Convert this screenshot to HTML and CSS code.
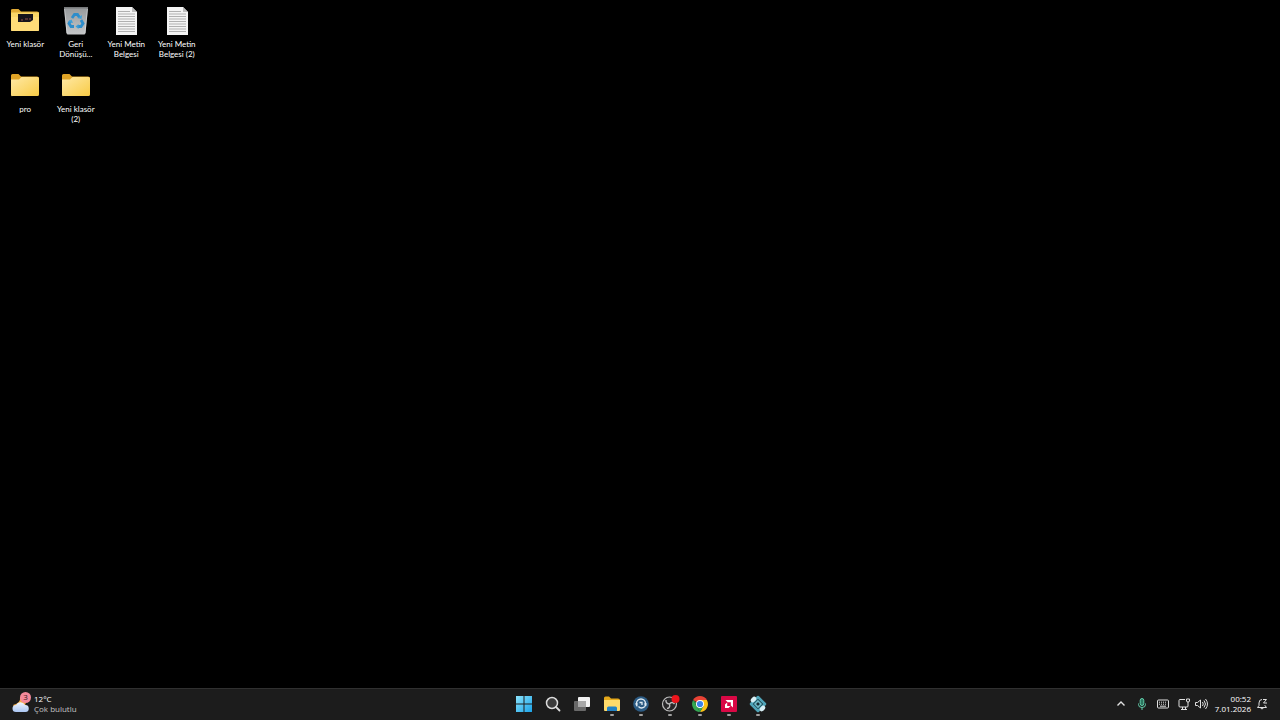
FILE: index.html
```html
<!DOCTYPE html>
<html lang="tr">
<head>
<meta charset="utf-8">
<meta name="viewport" content="width=device-width, initial-scale=1">
<title>Masaüstü</title>
<link rel="stylesheet" href="styles.css">
</head>
<body>
<svg class="defs" aria-hidden="true">
  <defs>
    <linearGradient id="folder-fill" x1="0" y1="0" x2="1" y2="1"><stop offset="0" stop-color="#ffe9a6"/><stop offset="1" stop-color="#f8cb45"/></linearGradient>
    <linearGradient id="bin-fill" x1="0" y1="0" x2="0" y2="1"><stop offset="0" stop-color="#96999b"/><stop offset="1" stop-color="#c4c6c8"/></linearGradient>
    <linearGradient id="win-fill" x1="0" y1="0" x2="1" y2="1"><stop offset="0" stop-color="#8be3fb"/><stop offset="1" stop-color="#1ba3e8"/></linearGradient>
    <linearGradient id="cloud-fill" x1="0" y1="0" x2="0" y2="1"><stop offset="0" stop-color="#f2f6ff"/><stop offset="1" stop-color="#aac6f2"/></linearGradient>
    <symbol id="folder" viewBox="0 0 30 30">
      <path d="M1 5.500q0-1.500 1.500-1.500h6l2.500 2.500h16q2 0 2 1.500v6H1z" fill="#dfa326"/>
      <path d="M1 9.500h8l2.500-2.500H27.500q1.500 0 1.500 1.500v16q0 1.500-1.500 1.500h-25Q1 26.500 1 25z" fill="url(#folder-fill)"/>
    </symbol>
    <symbol id="document" viewBox="0 0 30 30">
      <path d="M5 2h16l5 5v23H5z" fill="#f4f4f4"/>
      <path d="M21 2v5h5z" fill="#bdbdbd"/>
      <path d="M7 6.500h12M7 9h17M7 11.500h17M7 14h17M7 16.500h17M7 19h17M7 21.500h17M7 24h17M7 26.500h17" stroke="#a8a8a8" stroke-width=".9"/>
    </symbol>
  </defs>
</svg>

<main class="desktop">
  <button class="shortcut" type="button">
    <svg class="shortcut-icon" viewBox="0 0 30 30" aria-hidden="true">
      <path d="M1 5Q1 4 2.500 4h6l2.500 2.500h16q2 0 2 1.500v6H1z" fill="#e0aa35"/>
      <path d="M1 7.500h28V25q0 1-1 1H2q-1 0-1-1z" fill="#f9d568"/>
      <path d="M8 9h15v8H8z" fill="#17131b"/>
      <path d="M12 14v2M15 14h3M20 13v2" stroke="#94534c"/>
      <path d="M1 12h7v5h12l3-2v-3h6v12.500q0 1.500-1.500 1.500h-25Q1 26 1 24.500z" fill="#ffdc78"/>
    </svg>
    <span class="shortcut-label">Yeni klasör</span>
  </button>
  <button class="shortcut" type="button">
    <svg class="shortcut-icon" viewBox="0 0 30 30" aria-hidden="true">
      <path d="M3 2h24l-2.500 26q-.200 1.500-1.500 1.500H7Q5.700 29.500 5.500 28z" fill="url(#bin-fill)"/>
      <path d="M3 2h24l-.200 1.500H3.200z" fill="#77797b"/>
      <path d="M3.500 4 6 28M26.500 4 24 28" stroke="#e2e4e5" stroke-width=".6"/>
      <g fill="none" stroke="#2d8dcb" stroke-width="2.800">
        <path d="M11 13l2.500-3.500h3l2 3"/>
        <path d="M20 15l2 3.500-2 3h-3"/>
        <path d="M13 21.500h-3l-2-3 1.500-2.500"/>
      </g>
      <path d="M16.500 13l4 1 .500-4zM17.500 19v5l-3-2.500zM7 17l3.500-2.500 1.500 3.500z" fill="#3c9fd9"/>
    </svg>
    <span class="shortcut-label">Geri<br>Dönüşü...</span>
  </button>
  <button class="shortcut" type="button">
    <svg class="shortcut-icon" aria-hidden="true"><use href="#document"/></svg>
    <span class="shortcut-label">Yeni Metin<br>Belgesi</span>
  </button>
  <button class="shortcut" type="button">
    <svg class="shortcut-icon" aria-hidden="true"><use href="#document"/></svg>
    <span class="shortcut-label">Yeni Metin<br>Belgesi (2)</span>
  </button>
  <button class="shortcut row-start" type="button">
    <svg class="shortcut-icon" aria-hidden="true"><use href="#folder"/></svg>
    <span class="shortcut-label">pro</span>
  </button>
  <button class="shortcut" type="button">
    <svg class="shortcut-icon" aria-hidden="true"><use href="#folder"/></svg>
    <span class="shortcut-label">Yeni klasör<br>(2)</span>
  </button>
</main>

<footer class="taskbar">
  <button class="weather" type="button">
    <span class="weather-icon">
      <svg viewBox="0 0 20 20" aria-hidden="true">
        <path d="M9 3q1 6-7 8 2 4 8 3 6-2 5-9z" fill="#f5ad45"/>
        <path d="M5 18a3.500 3.500 0 0 1 0-7 5 5 0 0 1 9 0 3.500 3.500 0 0 1 .500 7z" fill="url(#cloud-fill)"/>
      </svg>
      <span class="weather-badge">3</span>
    </span>
    <span class="weather-text">
      <span class="temperature">12°C</span>
      <span class="condition">Çok bulutlu</span>
    </span>
  </button>

  <nav class="apps" aria-label="Görev çubuğu">
    <button class="app" type="button" aria-label="Başlat">
      <svg viewBox="0 0 20 20" aria-hidden="true"><path d="M2 2h7.500v7.500H2zM10.500 2H18v7.500h-7.500zM2 10.500h7.500V18H2zM10.500 10.500H18V18h-7.500z" fill="url(#win-fill)"/></svg>
    </button>
    <button class="app" type="button" aria-label="Ara">
      <svg viewBox="0 0 20 20" aria-hidden="true"><circle cx="9" cy="9" r="5.500" fill="#3b3b3b" stroke="#dcdcdc" stroke-width="1.500"/><path d="M13 13l3.500 3.500" stroke="#dcdcdc" stroke-width="1.800" stroke-linecap="round"/></svg>
    </button>
    <button class="app" type="button" aria-label="Görev görünümü">
      <svg viewBox="0 0 20 20" aria-hidden="true"><rect x="6" y="3" width="12" height="10" rx="1" fill="#f2f2f2"/><rect x="2" y="7" width="12" height="10" rx="1" fill="#696969"/><path d="M6 7h8v6H6z" fill="#a7a7a7"/></svg>
    </button>
    <button class="app running" type="button" aria-label="Dosya Gezgini">
      <svg viewBox="0 0 20 20" aria-hidden="true"><path d="M2 4q0-1.500 1.500-1.500H7l2 2h7q2 0 2 2V10H2z" fill="#e6a91b"/><path d="M2 6h16v10q0 1-1 1H3q-1 0-1-1z" fill="#ffdb6b"/><path d="M5 17v-3q0-1.500 1.500-1.500h7q1.500 0 1.500 1.500v3z" fill="#2382c5"/></svg>
    </button>
    <button class="app running" type="button" aria-label="TeamSpeak">
      <svg viewBox="0 0 20 20" aria-hidden="true"><circle cx="10" cy="10" r="7.800" fill="#2c5b83"/><path d="M5.500 11V9.500a4.500 4.500 0 0 1 9 0V11" fill="none" stroke="#dfeaf2" stroke-width="1.300"/><path d="M4.500 9h2v3.500h-1q-1-1-1-3.500zM13.500 9h2v2.500l-1 1h-1z" fill="#dfeaf2"/><path d="M8.500 8.500h2.500v2.500M7.500 12.500q2.500 3 6.500 0" fill="none" stroke="#dfeaf2" stroke-width="1.300"/></svg>
    </button>
    <button class="app running" type="button" aria-label="OBS Studio">
      <svg viewBox="0 0 20 20" aria-hidden="true"><circle cx="9.500" cy="10" r="7" fill="#272628" stroke="#bdbdbd" stroke-width="1.200"/><path d="M9.500 10Q5.500 9.500 6 6M9.500 10q2.500-3 5 0M9.500 10q1 4-2.500 4.500" fill="none" stroke="#bdbdbd" stroke-width="1.400"/><circle cx="15.500" cy="5" r="4" fill="#ed151c"/></svg>
    </button>
    <button class="app running" type="button" aria-label="Google Chrome">
      <svg viewBox="0 0 20 20" aria-hidden="true"><path d="M10 10 3.100 6A8 8 0 0 1 16.900 6z" fill="#e94335"/><path d="M10 10V6h6.900A8 8 0 0 1 10 18l3.500-6z" fill="#fbc116"/><path d="M3.100 6 10 18A8 8 0 0 1 3.100 6z" fill="#34a853"/><path d="M3.100 6 6.600 12 10 18l3.500-6H10z" fill="#34a853"/><circle cx="10" cy="10" r="4" fill="#fff"/><circle cx="10" cy="10" r="3.100" fill="#3b83ec"/></svg>
    </button>
    <button class="app running" type="button" aria-label="AMD Software">
      <svg viewBox="0 0 20 20" aria-hidden="true"><rect x="2" y="2" width="16" height="16" rx="1" fill="#d90845"/><path d="M6.500 6H14v7.500l-2.200-2V8.200H8.700zM6 10.500l2.200-2V12h3.300l-2 2H6z" fill="#fff"/></svg>
    </button>
    <button class="app running" type="button" aria-label="Ağ uygulaması">
      <svg viewBox="0 0 20 20" aria-hidden="true"><path d="M10 3l7 7-7 7-7-7z" fill="#123946" stroke="#4fa3b7" stroke-width="2.500" stroke-linejoin="round"/><ellipse cx="5.500" cy="5.500" rx="3.200" ry="2.200" transform="rotate(-45 5.500 5.500)" fill="#d7eef4"/><ellipse cx="14.500" cy="14.500" rx="3.200" ry="2.200" transform="rotate(-45 14.500 14.500)" fill="#d7eef4"/><path d="M10 7l3 3-3 3-3-3z" fill="#172e37" stroke="#71bdca" stroke-width="1.600"/></svg>
    </button>
  </nav>

  <div class="tray">
    <button class="tray-button" type="button" aria-label="Gizli simgeleri göster">
      <svg viewBox="0 0 14 14" aria-hidden="true"><path d="M3.500 8.500 7 5l3.500 3.500" stroke-width="1.400"/></svg>
    </button>
    <button class="tray-button microphone" type="button" aria-label="Mikrofon">
      <svg viewBox="0 0 14 14" aria-hidden="true"><rect x="5.200" y="1.500" width="3.600" height="7" rx="1.800" fill="#2c765f"/><path d="M3.500 6.500v1q0 3 3.500 3t3.500-3v-1M7 10.500V13"/></svg>
    </button>
    <button class="tray-button" type="button" aria-label="Dokunmatik klavye">
      <svg viewBox="0 0 14 14" aria-hidden="true"><rect x="1.500" y="3" width="11" height="8" rx="1"/><path d="M3 5.200h8M3 7.200h8" stroke-dasharray="1 1"/><path d="M4 9.200h6"/></svg>
    </button>
    <button class="quick-settings" type="button" aria-label="Ağ ve ses">
      <svg viewBox="0 0 14 14" aria-hidden="true"><path d="M8 2.500H3q-1 0-1 1V9q0 1 1 1h7q1 0 1-1V7M4 12.500h6M5.500 10v2.500M8.500 10v2.500M9.500 2h3v2q0 1-1.500 1T9.500 4zM11 5v2"/></svg>
      <svg viewBox="0 0 14 14" aria-hidden="true"><path d="M1.500 5.500h2L6.500 3v8l-3-2.500h-2zM8.500 5q1.500 2 0 4M10 3.500q3 3.500 0 7M11.500 2q4 5 0 10"/></svg>
    </button>
    <button class="clock" type="button">
      <time datetime="2026-01-07T00:52"><span>00:52</span><span>7.01.2026</span></time>
      <svg viewBox="0 0 14 14" aria-hidden="true"><path d="M7 2.500Q4 2.500 4 6v2.500L2.500 10.500h9L10 8.500V8M5.500 11q1.500 2 3 0M8 2.500h3.500L8.500 6H12"/></svg>
    </button>
  </div>
</footer>
</body>
</html>
```
FILE: styles.css
```css
* { box-sizing: border-box; }

body {
  margin: 0;
  min-height: 100vh;
  display: flex;
  flex-direction: column;
  background: #000;
  color: #fff;
  font-family: "Open Sans", "Noto Sans", sans-serif;
  font-size: 8px;
  line-height: 10px;
}

button {
  margin: 0;
  padding: 0;
  border: 0;
  background: none;
  color: inherit;
  font: inherit;
}

svg { display: block; flex: none; }

.defs { position: absolute; width: 0; height: 0; }

.desktop {
  flex: 1;
  display: grid;
  grid-template-columns: repeat(4, minmax(0, 1fr));
  align-content: start;
  row-gap: 6px;
  width: 202px;
  padding-top: 5px;
  font-family: Lato, "Open Sans", sans-serif;
}

.shortcut {
  display: flex;
  flex-direction: column;
  align-items: center;
  gap: 4px;
  min-height: 59px;
}

.row-start { grid-column: 1; }

.shortcut-icon { width: 30px; height: 30px; }

.shortcut-label { white-space: nowrap; }

.taskbar {
  display: grid;
  grid-template-columns: 1fr auto 1fr;
  height: 32px;
  padding-bottom: 2px;
  border-top: 1px solid #303030;
  background: #1c1c1c;
}

.weather {
  justify-self: start;
  display: flex;
  align-items: center;
  gap: 3px;
  padding-left: 11px;
  text-align: left;
}

.weather-icon { position: relative; }

.weather-icon svg { width: 20px; height: 20px; }

.weather-badge {
  position: absolute;
  top: -2px;
  right: 0;
  width: 11px;
  height: 11px;
  border-radius: 50%;
  background: #f5899b;
  color: #33151b;
  text-align: center;
}

.weather-text { display: flex; flex-direction: column; }

.condition { color: #c4c4c4; }

.apps {
  display: flex;
  width: 266px;
  padding-left: 2px;
}

.app {
  position: relative;
  flex: 1;
  display: flex;
  align-items: center;
  justify-content: center;
}

.app svg { width: 20px; height: 20px; }

.running::after {
  content: "";
  position: absolute;
  bottom: 2px;
  left: 50%;
  width: 4px;
  height: 2px;
  margin-left: -2px;
  border-radius: 1px;
  background: #a0a0a0;
}

.tray {
  justify-self: end;
  display: flex;
  align-items: center;
  gap: 7px;
  padding-right: 11px;
}

.tray svg {
  width: 14px;
  height: 14px;
  fill: none;
  stroke: #e0e0e0;
  stroke-width: 1;
}

.tray .microphone svg { stroke: #62cdaa; }

.quick-settings { display: flex; gap: 3px; }

.clock {
  display: flex;
  align-items: center;
  gap: 4px;
  text-align: right;
}

.clock time { display: flex; flex-direction: column; }
```
